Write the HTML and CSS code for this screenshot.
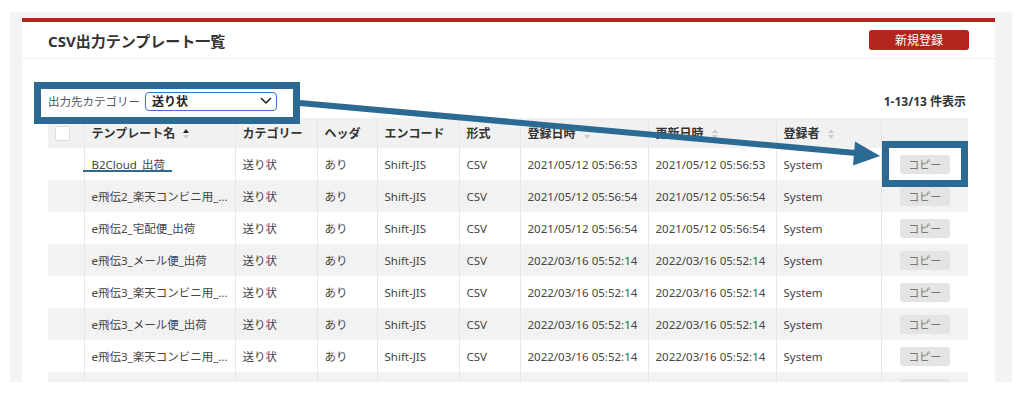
FILE: index.html
```html
<!DOCTYPE html>
<html lang="ja">
<head>
    <meta charset="UTF-8">
    <meta name="viewport" content="width=device-width, initial-scale=1.0">
    <title>CSV出力テンプレート一覧</title>
    <link rel="stylesheet" href="styles.css">
</head>
<body>
    <div class="frame">
        <div class="card">
            <div class="card-header">
                <h1>CSV出力テンプレート一覧</h1>
                <button type="button" class="btn-new">新規登録</button>
            </div>
            <div class="card-body">
                <div class="toolbar">
                    <div class="filter">
                        <span class="filter-label">出力先カテゴリー</span>
                        <div class="select">
                            <span>送り状</span>
                            <svg width="12" height="8" viewBox="0 0 12 8"><path d="M1.5 1.5 L6 6 L10.5 1.5" fill="none" stroke="#222" stroke-width="1.6" stroke-linecap="round" stroke-linejoin="round"/></svg>
                        </div>
                    </div>
                    <div class="count">1-13/13 件表示</div>
                </div>
                <table class="list">
                    <colgroup>
                        <col style="width:36px"><col style="width:151px"><col style="width:82px"><col style="width:60px"><col style="width:82px">
                        <col style="width:61px"><col style="width:128px"><col style="width:128px"><col style="width:105px"><col style="width:87px">
                    </colgroup>
                    <thead>
                        <tr>
                            <th><span class="check"></span></th>
                            <th>テンプレート名<svg class="sort" width="6" height="10" viewBox="0 0 6 10"><path d="M0 4 L3 0 L6 4Z" fill="#222"/><path d="M0 6 L3 10 L6 6Z" fill="#ccc"/></svg></th>
                            <th>カテゴリー</th>
                            <th>ヘッダ</th>
                            <th>エンコード</th>
                            <th>形式</th>
                            <th>登録日時<svg class="sort" width="6" height="10" viewBox="0 0 6 10"><path d="M0 6 L3 10 L6 6Z" fill="#ccc"/></svg></th>
                            <th>更新日時<svg class="sort" width="6" height="10" viewBox="0 0 6 10"><path d="M0 4 L3 0 L6 4Z" fill="#ccc"/><path d="M0 6 L3 10 L6 6Z" fill="#ccc"/></svg></th>
                            <th>登録者<svg class="sort" width="6" height="10" viewBox="0 0 6 10"><path d="M0 4 L3 0 L6 4Z" fill="#ccc"/><path d="M0 6 L3 10 L6 6Z" fill="#ccc"/></svg></th>
                            <th></th>
                        </tr>
                    </thead>
                    <tbody>
                        <tr><td></td><td>B2Cloud_出荷</td><td>送り状</td><td>あり</td><td>Shift-JIS</td><td>CSV</td><td>2021/05/12 05:56:53</td><td>2021/05/12 05:56:53</td><td>System</td><td class="act"><button type="button" class="btn-copy">コピー</button></td></tr>
                        <tr><td></td><td>e飛伝2_楽天コンビニ用_...</td><td>送り状</td><td>あり</td><td>Shift-JIS</td><td>CSV</td><td>2021/05/12 05:56:54</td><td>2021/05/12 05:56:54</td><td>System</td><td class="act"><button type="button" class="btn-copy">コピー</button></td></tr>
                        <tr><td></td><td>e飛伝2_宅配便_出荷</td><td>送り状</td><td>あり</td><td>Shift-JIS</td><td>CSV</td><td>2021/05/12 05:56:54</td><td>2021/05/12 05:56:54</td><td>System</td><td class="act"><button type="button" class="btn-copy">コピー</button></td></tr>
                        <tr><td></td><td>e飛伝3_メール便_出荷</td><td>送り状</td><td>あり</td><td>Shift-JIS</td><td>CSV</td><td>2022/03/16 05:52:14</td><td>2022/03/16 05:52:14</td><td>System</td><td class="act"><button type="button" class="btn-copy">コピー</button></td></tr>
                        <tr><td></td><td>e飛伝3_楽天コンビニ用_...</td><td>送り状</td><td>あり</td><td>Shift-JIS</td><td>CSV</td><td>2022/03/16 05:52:14</td><td>2022/03/16 05:52:14</td><td>System</td><td class="act"><button type="button" class="btn-copy">コピー</button></td></tr>
                        <tr><td></td><td>e飛伝3_メール便_出荷</td><td>送り状</td><td>あり</td><td>Shift-JIS</td><td>CSV</td><td>2022/03/16 05:52:14</td><td>2022/03/16 05:52:14</td><td>System</td><td class="act"><button type="button" class="btn-copy">コピー</button></td></tr>
                        <tr><td></td><td>e飛伝3_楽天コンビニ用_...</td><td>送り状</td><td>あり</td><td>Shift-JIS</td><td>CSV</td><td>2022/03/16 05:52:14</td><td>2022/03/16 05:52:14</td><td>System</td><td class="act"><button type="button" class="btn-copy">コピー</button></td></tr>
                        <tr><td></td><td></td><td></td><td></td><td></td><td></td><td></td><td></td><td></td><td class="act"><span class="btn-copy"></span></td></tr>
                    </tbody>
                </table>
            </div>
        </div>
    </div>

    <!-- annotation layer -->
    <svg class="notes" width="1024" height="395" viewBox="0 0 1024 395">
        <rect x="37.5" y="85.5" width="259" height="35" fill="none" stroke="#2b6a93" stroke-width="7"/>
        <line x1="300" y1="103" x2="856" y2="153" stroke="#2b6a93" stroke-width="6"/>
        <polygon points="880,156 855,141.5 853,165.5" fill="#2b6a93"/>
        <rect x="885.5" y="144.5" width="79" height="39" fill="none" stroke="#2b6a93" stroke-width="7"/>
        <line x1="83" y1="171" x2="172" y2="171" stroke="#2b6a93" stroke-width="2.2"/>
    </svg>
</body>
</html>
```

FILE: styles.css
```css
body {
    margin: 0;
    font-family: "Noto Sans", "Noto Sans CJK JP", sans-serif;
    color: #444;
    background: #fff;
}
.frame {
    margin: 12px 12px 0 10px;
    height: 370px;
    padding: 6px 17px 0 12px;
    background: #f3f3f3;
    overflow: hidden;
    box-sizing: border-box;
}
.card {
    background: #fff;
    border-top: 4px solid #b3261f;
    height: 100%;
}
.card-header {
    display: flex;
    justify-content: space-between;
    align-items: center;
    height: 36px;
    padding: 0 26px;
    border-bottom: 1px solid #eee;
}
.card-header h1 {
    margin: 0;
    font-size: 15px;
    font-weight: bold;
    color: #333;
}
.btn-new {
    width: 100px;
    height: 20px;
    padding: 0;
    border: none;
    border-radius: 3px;
    background: #b3241d;
    color: #fff;
    font-family: inherit;
    font-size: 12px;
}
.card-body {
    padding: 30px 26px 0;
}
.toolbar {
    display: flex;
    justify-content: space-between;
    align-items: center;
    height: 24px;
    padding-right: 3px;
    margin-bottom: 5px;
}
.filter {
    display: flex;
    align-items: center;
    gap: 5px;
}
.filter-label {
    font-size: 11.5px;
    color: #555;
}
.select {
    display: flex;
    justify-content: space-between;
    align-items: center;
    width: 132px;
    height: 19px;
    padding: 0 4px 0 6px;
    border: 1.5px solid #3b70d0;
    border-radius: 4px;
    box-sizing: border-box;
    font-size: 12px;
    font-weight: bold;
    color: #222;
}
.count {
    font-size: 12px;
    font-weight: bold;
    color: #333;
}
.list {
    width: 920px;
    table-layout: fixed;
    border-collapse: collapse;
    font-size: 11.5px;
}
.list th,
.list td {
    padding: 0 7px;
    border-left: 1px solid #e6e6e6;
    text-align: left;
    white-space: nowrap;
    overflow: hidden;
}
.list th:first-child,
.list td:first-child {
    border-left: none;
}
.list th {
    height: 30px;
    background: #f1f1f1;
    font-size: 12px;
    font-weight: bold;
    color: #333;
}
.list td {
    height: 32px;
}
.list tbody tr:nth-child(even) {
    background: #f2f2f2;
}
.sort {
    margin-left: 8px;
    vertical-align: -1px;
}
.check {
    display: block;
    width: 13px;
    height: 13px;
    background: #fff;
    border: 1px solid #ddd;
    border-radius: 2px;
}
.act {
    text-align: center !important;
}
.btn-copy {
    display: inline-block;
    width: 50px;
    height: 19px;
    padding: 0;
    border: none;
    border-radius: 3px;
    background: #e4e4e4;
    color: #777;
    font-family: inherit;
    font-size: 11px;
    vertical-align: middle;
}
.notes {
    position: absolute;
    left: 0;
    top: 0;
    pointer-events: none;
}
```
